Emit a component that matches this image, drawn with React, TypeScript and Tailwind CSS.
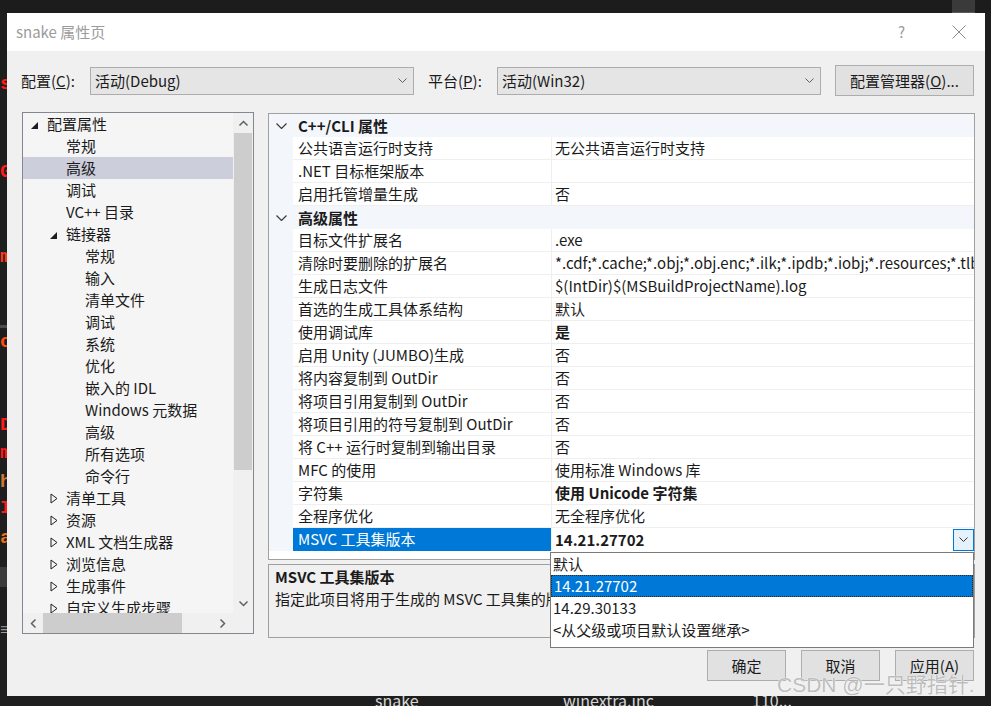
import React from "react";

type TreeItem = { label: string; level: 0 | 1 | 2; toggle?: "open" | "closed"; selected?: boolean };

const tree: TreeItem[] = [
  { label: "配置属性", level: 0, toggle: "open" },
  { label: "常规", level: 1 },
  { label: "高级", level: 1, selected: true },
  { label: "调试", level: 1 },
  { label: "VC++ 目录", level: 1 },
  { label: "链接器", level: 1, toggle: "open" },
  { label: "常规", level: 2 },
  { label: "输入", level: 2 },
  { label: "清单文件", level: 2 },
  { label: "调试", level: 2 },
  { label: "系统", level: 2 },
  { label: "优化", level: 2 },
  { label: "嵌入的 IDL", level: 2 },
  { label: "Windows 元数据", level: 2 },
  { label: "高级", level: 2 },
  { label: "所有选项", level: 2 },
  { label: "命令行", level: 2 },
  { label: "清单工具", level: 1, toggle: "closed" },
  { label: "资源", level: 1, toggle: "closed" },
  { label: "XML 文档生成器", level: 1, toggle: "closed" },
  { label: "浏览信息", level: 1, toggle: "closed" },
  { label: "生成事件", level: 1, toggle: "closed" },
  { label: "自定义生成步骤", level: 1, toggle: "closed" },
];

const indent = { 0: "pl-[8px]", 1: "pl-[27px]", 2: "pl-[46px]" };

type Row =
  | { kind: "cat"; label: string }
  | { kind: "prop"; name: string; value: string; bold?: boolean; selected?: boolean };

const rows: Row[] = [
  { kind: "cat", label: "C++/CLI 属性" },
  { kind: "prop", name: "公共语言运行时支持", value: "无公共语言运行时支持" },
  { kind: "prop", name: ".NET 目标框架版本", value: "" },
  { kind: "prop", name: "启用托管增量生成", value: "否" },
  { kind: "cat", label: "高级属性" },
  { kind: "prop", name: "目标文件扩展名", value: ".exe" },
  { kind: "prop", name: "清除时要删除的扩展名", value: "*.cdf;*.cache;*.obj;*.obj.enc;*.ilk;*.ipdb;*.iobj;*.resources;*.tlb;*.tli;*.tlh;*.tmp;*.rsp" },
  { kind: "prop", name: "生成日志文件", value: "$(IntDir)$(MSBuildProjectName).log" },
  { kind: "prop", name: "首选的生成工具体系结构", value: "默认" },
  { kind: "prop", name: "使用调试库", value: "是", bold: true },
  { kind: "prop", name: "启用 Unity (JUMBO)生成", value: "否" },
  { kind: "prop", name: "将内容复制到 OutDir", value: "否" },
  { kind: "prop", name: "将项目引用复制到 OutDir", value: "否" },
  { kind: "prop", name: "将项目引用的符号复制到 OutDir", value: "否" },
  { kind: "prop", name: "将 C++ 运行时复制到输出目录", value: "否" },
  { kind: "prop", name: "MFC 的使用", value: "使用标准 Windows 库" },
  { kind: "prop", name: "字符集", value: "使用 Unicode 字符集", bold: true },
  { kind: "prop", name: "全程序优化", value: "无全程序优化" },
  { kind: "prop", name: "MSVC 工具集版本", value: "14.21.27702", bold: true, selected: true },
];

const options = ["默认", "14.21.27702", "14.29.30133", "<从父级或项目默认设置继承>"];

function Chevron({ dir, color = "#555", width = 1 }: { dir: "down" | "up" | "left" | "right"; color?: string; width?: number }) {
  const vertical = dir === "down" || dir === "up";
  const pts = {
    down: "0.5,0.5 4.5,4.5 8.5,0.5",
    up: "0.5,4.5 4.5,0.5 8.5,4.5",
    left: "4.5,0.5 0.5,4.5 4.5,8.5",
    right: "0.5,0.5 4.5,4.5 0.5,8.5",
  }[dir];
  return (
    <svg width={vertical ? 9 : 5} height={vertical ? 5 : 9} viewBox={vertical ? "0 0 9 5" : "0 0 5 9"} className="overflow-visible">
      <polyline points={pts} fill="none" stroke={color} strokeWidth={width} />
    </svg>
  );
}

function Toggle({ kind }: { kind?: "open" | "closed" }) {
  if (kind === "open")
    return (
      <svg width="7" height="7" viewBox="0 0 7 7" className="mt-[3px]">
        <polygon points="7,0 7,7 0,7" fill="#1e1e1e" />
      </svg>
    );
  if (kind === "closed")
    return (
      <svg width="8" height="11" viewBox="0 0 8 11">
        <polygon points="1,1 7,5.5 1,10" fill="none" stroke="#1e1e1e" strokeWidth="1" />
      </svg>
    );
  return null;
}

function Combo({ text }: { text: string }) {
  return (
    <div className="w-[324px] h-[28px] bg-[#e5e5e5] border border-[#adadad] flex items-center pl-[4px] pr-[6px]">
      <span className="flex-1">{text}</span>
      <Chevron dir="down" color="#606060" />
    </div>
  );
}

function Button({ children, className = "" }: { children: React.ReactNode; className?: string }) {
  return (
    <div className={`h-[31px] bg-[#e1e1e1] border border-[#adadad] flex items-center justify-center ${className}`}>{children}</div>
  );
}

export default function App() {
  return (
    <div className="relative w-[991px] h-[706px] overflow-hidden bg-[#1e1e1e] flex flex-col font-['Noto_Sans_CJK_SC',sans-serif] text-[15px] leading-[22px] text-[#1b1b1b]">
      {/* desktop strip above the dialog */}
      <div className="h-[13px] shrink-0 bg-[#1c1c1c] flex">
        <div className="ml-auto mr-[16px] w-[23px] h-[13px] bg-[#3a3a3a] border-b border-[#5a5a5a]" />
      </div>

      <div className="flex h-[683px] shrink-0">
        {/* editor behind, left edge */}
        <div className="w-[7px] shrink-0 overflow-hidden flex flex-col font-['Liberation_Mono',monospace] font-bold text-[19px] leading-[20px] whitespace-nowrap">
          <span className="mt-[61px] text-[#ff1a1a]">s</span>
          <span className="mt-[68px] text-[#ff1a1a]">G</span>
          <span className="mt-[65px] text-[#ff3a1a]">m</span>
          <span className="mt-[58px] h-[3px] bg-[#4a4a4a] shrink-0" />
          <span className="mt-[4px] text-[#ff4a10]">c</span>
          <span className="mt-[63px] text-[#ff1a1a]">D</span>
          <span className="mt-[8px] text-[#ff1a1a]">m</span>
          <span className="mt-[9px] text-[#c87a3a]">h</span>
          <span className="mt-[6px] text-[#ff1a1a]">I</span>
          <span className="mt-[10px] text-[#e8701a]">a</span>
          <span className="mt-[19px] h-[20px] bg-[#3a3a3a] shrink-0" />
          <span className="mt-[34px] text-[#9a9a9a] font-normal text-[16px]">≡</span>
        </div>

        {/* dialog */}
        <div className="w-[978px] shrink-0 bg-[#f0f0f0] flex flex-col">
          <div className="h-[38px] bg-white flex items-center pl-[9px] pr-[19px]">
            <span className="flex-1 text-[#9b9b9b]">snake 属性页</span>
            <span className="text-[#9b9b9b] text-[15px]">?</span>
            <svg width="14" height="14" viewBox="0 0 14 14" className="ml-[47px]">
              <path d="M0.5 0.5 L13.5 13.5 M13.5 0.5 L0.5 13.5" stroke="#8a8a8a" strokeWidth="1" />
            </svg>
          </div>

          {/* configuration row */}
          <div className="mt-[14px] h-[31px] flex items-center pl-[14px]">
            <span className="w-[69px]">配置(<span className="underline">C</span>):</span>
            <Combo text="活动(Debug)" />
            <span className="ml-[14px] w-[69px]">平台(<span className="underline">P</span>):</span>
            <Combo text="活动(Win32)" />
            <Button className="ml-[14px] w-[139px]">
              配置管理器(<span className="underline">O</span>)...
            </Button>
          </div>

          <div className="mt-[16px] flex items-start pl-[15px] gap-[14px]">
            {/* tree */}
            <div className="w-[232px] h-[522px] border border-[#828790] flex flex-col">
              <div className="flex h-[500px]">
                <div className="w-[210px] bg-[#f5f5f5] overflow-hidden">
                  {tree.map((t, i) => (
                    <div
                      key={i}
                      className={`h-[22px] flex items-center whitespace-nowrap ${indent[t.level]} ${t.selected ? "bg-[#cccedb]" : ""}`}
                    >
                      <span className="w-[16px] flex items-center">
                        <Toggle kind={t.toggle} />
                      </span>
                      <span>{t.label}</span>
                    </div>
                  ))}
                </div>
                <div className="w-[20px] bg-[#f0f0f0] flex flex-col items-center">
                  <div className="h-[20px] flex items-center justify-center">
                    <Chevron dir="up" color="#606060" width={1.5} />
                  </div>
                  <div className="w-[18px] h-[337px] bg-[#cdcdcd]" />
                  <div className="flex-1" />
                  <div className="h-[20px] flex items-center justify-center">
                    <Chevron dir="down" color="#606060" width={1.5} />
                  </div>
                </div>
              </div>
              <div className="h-[20px] bg-[#f0f0f0] flex items-center">
                <div className="w-[20px] flex justify-center">
                  <Chevron dir="left" color="#606060" width={1.5} />
                </div>
                <div className="w-[139px] h-[20px] bg-[#cdcdcd]" />
                <div className="ml-[35px] w-[10px] flex justify-center">
                  <Chevron dir="right" color="#606060" width={1.5} />
                </div>
              </div>
            </div>

            {/* right column */}
            <div className="mt-[1px] w-[707px] flex flex-col">
              <div className="h-[447px] border border-[#a0a0a0] bg-white flex flex-col">
                {rows.map((r, i) =>
                  r.kind === "cat" ? (
                    <div key={i} className="h-[23px] flex items-center bg-[#f3f6fb]">
                      <div className="w-[24px] flex justify-center">
                        <svg width="11" height="6" viewBox="0 0 11 6">
                          <polyline points="0.5,0.5 5.5,5.5 10.5,0.5" fill="none" stroke="#3c3c3c" strokeWidth="1.2" />
                        </svg>
                      </div>
                      <span className="pl-[5px] font-bold">{r.label}</span>
                    </div>
                  ) : (
                    <div key={i} className="h-[23px] flex">
                      <div className="w-[24px] bg-[#f3f6fb]" />
                      <div
                        className={`w-[258px] pl-[5px] whitespace-nowrap overflow-hidden ${
                          r.selected ? "bg-[#0078d7] text-white" : "border-b border-[#efefef]"
                        }`}
                      >
                        {r.name}
                      </div>
                      <div className="w-[1px] bg-[#efefef]" />
                      <div className={`w-[422px] pl-[3px] flex items-center whitespace-nowrap overflow-hidden ${r.selected ? "" : "border-b border-[#efefef]"}`}>
                        <span className={`flex-1 overflow-hidden ${r.bold ? "font-bold" : ""}`}>{r.value}</span>
                        {r.selected && (
                          <div className="w-[21px] h-[22px] bg-[#e5f1fb] border border-[#0078d7] flex items-center justify-center">
                            <Chevron dir="down" color="#333" />
                          </div>
                        )}
                      </div>
                    </div>
                  )
                )}
              </div>
              <div className="mt-[4px] h-[74px] border border-[#a0a0a0] bg-[#f0f0f0] pl-[6px] pt-[1px] overflow-hidden">
                <div className="font-bold">MSVC 工具集版本</div>
                {/* the rest of the line sits under the open dropdown */}
                <div className="w-[275px] whitespace-nowrap overflow-hidden">指定此项目将用于生成的 MSVC 工具集的版本。</div>
              </div>
            </div>
          </div>

          <div className="mt-[12px] flex justify-end gap-[15px] pr-[11px]">
            <Button className="w-[79px]">确定</Button>
            <Button className="w-[79px]">取消</Button>
            <Button className="w-[79px]">应用(A)</Button>
          </div>
        </div>

        <div className="w-[6px] shrink-0 bg-[#1e1e1e]" />
      </div>

      {/* taskbar-ish strip below */}
      <div className="h-[10px] shrink-0 overflow-hidden bg-[#1e1e1e] flex text-[#d8d8d8] text-[16px] leading-[16px] whitespace-nowrap">
        <span className="ml-[375px] w-[188px] mt-[-4px]">snake</span>
        <span className="w-[189px] mt-[-4px]">winextra.inc</span>
        <span className="mt-[-4px]">110...</span>
      </div>

      {/* open dropdown list */}
      <div className="absolute left-[550px] top-[552px] w-[424px] h-[96px] bg-white border border-[#7a7a7a] flex flex-col">
        {options.map((o, i) => (
          <div
            key={i}
            className={`h-[22px] pl-[2px] whitespace-nowrap ${
              i === 1 ? "bg-[#0078d7] text-white border border-dotted border-[#3a2a10] leading-[20px] pl-[1px]" : ""
            }`}
          >
            {o}
          </div>
        ))}
      </div>

      {/* watermark */}
      <div className="absolute left-[777px] top-[673px] text-[21px] leading-[24px] text-[#bdbdbd] font-['Liberation_Sans','Noto_Sans_CJK_SC',sans-serif] [text-shadow:0_0_1px_#ffffff,0_0_1px_#ffffff] whitespace-nowrap">
        CSDN @一只野指针.
      </div>
    </div>
  );
}
